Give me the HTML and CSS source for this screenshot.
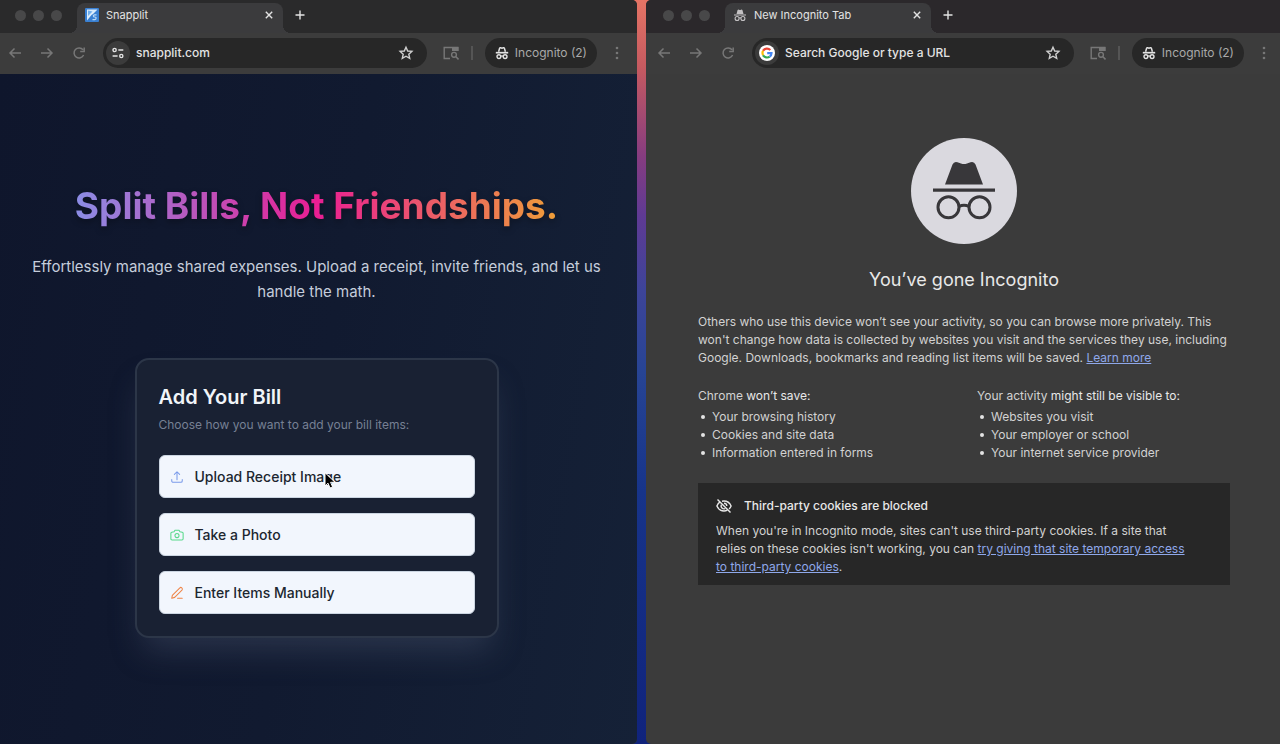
FILE: index.html
```
<!DOCTYPE html>
<html lang="en">
<head>
    <meta charset="UTF-8">
    <meta name="viewport" content="width=device-width, initial-scale=1.0">
    <title>Snapplit</title>
    <link rel="stylesheet" href="styles.css">
</head>
<body>
    <!-- Shared icons -->
    <svg class="icon-defs" aria-hidden="true">
        <symbol id="icon-back" viewBox="0 0 16 16">
            <path d="M14 8H3.500M7.500 3.500L3 8l4.500 4.500" fill="none" stroke="currentColor" stroke-width="1.5"/>
        </symbol>
        <symbol id="icon-forward" viewBox="0 0 16 16">
            <path d="M2 8h10.500M8.500 3.500L13 8l-4.500 4.500" fill="none" stroke="currentColor" stroke-width="1.5"/>
        </symbol>
        <symbol id="icon-reload" viewBox="0 0 16 16">
            <path d="M12.600 10A5 5 0 1 1 12 4.800M13.200 2.500v4H9.200" fill="none" stroke="currentColor" stroke-width="1.5"/>
        </symbol>
        <symbol id="icon-close" viewBox="0 0 10 10">
            <path d="M1.800 1.800l6.400 6.400M8.200 1.800L1.800 8.200" fill="none" stroke="currentColor" stroke-width="1.4"/>
        </symbol>
        <symbol id="icon-plus" viewBox="0 0 10 10">
            <path d="M5 .5v9M.5 5h9" fill="none" stroke="currentColor" stroke-width="1.4"/>
        </symbol>
        <symbol id="icon-star" viewBox="0 0 16 16">
            <path d="M8 2.200l1.700 3.800 4.200.4-3.100 2.800.9 4.100L8 11.200l-3.700 2.100.9-4.100-3.100-2.800L6.300 6z" fill="none" stroke="currentColor" stroke-width="1.4"/>
        </symbol>
        <symbol id="icon-panel" viewBox="0 0 16 14">
            <path d="M7 12.500H1.200v-11H14.800V5" fill="none" stroke="currentColor" stroke-width="1.4"/>
            <path d="M9 1h6.500v4H9z" fill="currentColor"/>
            <circle cx="11" cy="8.800" r="2.400" fill="none" stroke="currentColor" stroke-width="1.4"/>
            <path d="M12.700 10.500l2.800 2.900" stroke="currentColor" stroke-width="1.5"/>
        </symbol>
        <symbol id="icon-dots" viewBox="0 0 16 16">
            <circle cx="8" cy="3" r="1.300" fill="currentColor"/>
            <circle cx="8" cy="8" r="1.300" fill="currentColor"/>
            <circle cx="8" cy="13" r="1.300" fill="currentColor"/>
        </symbol>
        <symbol id="icon-agent" viewBox="0 0 14 14">
            <path d="M3.600 5.700L4.600 2.200Q4.900 1.500 5.600 1.700L7 2.100l1.400-.4q.7-.2 1 .5l1 3.500" fill="none" stroke="currentColor" stroke-width="1.5"/>
            <path d="M.8 6.700h12.400" stroke="currentColor" stroke-width="1.7"/>
            <circle cx="3.900" cy="10.600" r="1.900" fill="none" stroke="currentColor" stroke-width="1.4"/>
            <circle cx="10.100" cy="10.600" r="1.900" fill="none" stroke="currentColor" stroke-width="1.4"/>
            <path d="M5.700 10.200q1.300-.7 2.600 0" fill="none" stroke="currentColor" stroke-width="1.3"/>
        </symbol>
    </svg>

    <main class="desktop">
        <section class="window window-left" aria-label="Snapplit">
            <div class="tab-strip">
                <div class="lights"><span></span><span></span><span></span></div>
                <div class="tab">
                    <svg class="tab-icon" viewBox="0 0 14 14" aria-hidden="true">
                        <rect width="14" height="14" rx="1" fill="#3a80d2"/>
                        <path d="M2 1.500h10.500L8 6l-1.500 1L2 12.500z" fill="#dcecfb"/>
                        <path d="M3 2.500l4.500 1L3 8z" fill="#72b0ee"/>
                        <path d="M11.500 6.800H9.600q-1.200 0-1.200 1.100T9.800 9t1.300 1.300T9.700 11.600H7.500" fill="none" stroke="#b9d9f8" stroke-width="1.2"/>
                    </svg>
                    <span class="tab-title">Snapplit</span>
                    <button class="tab-close" aria-label="Close tab"><svg><use href="#icon-close"/></svg></button>
                </div>
                <button class="new-tab" aria-label="New tab"><svg><use href="#icon-plus"/></svg></button>
            </div>

            <div class="toolbar">
                <nav class="nav">
                    <button aria-label="Back"><svg><use href="#icon-back"/></svg></button>
                    <button aria-label="Forward"><svg><use href="#icon-forward"/></svg></button>
                    <button aria-label="Reload"><svg><use href="#icon-reload"/></svg></button>
                </nav>
                <div class="omnibox">
                    <button class="site-info" aria-label="Site information">
                        <svg viewBox="0 0 12 12">
                            <g fill="none" stroke="currentColor" stroke-width="1.4">
                                <circle cx="2.600" cy="3" r="1.600"/>
                                <path d="M6.300 3h5M.6 9h5"/>
                                <circle cx="9.300" cy="9" r="1.600"/>
                            </g>
                        </svg>
                    </button>
                    <input type="text" value="snapplit.com" aria-label="Address bar">
                    <button class="bookmark" aria-label="Bookmark this page"><svg><use href="#icon-star"/></svg></button>
                </div>
                <div class="actions">
                    <button aria-label="Side panel"><svg><use href="#icon-panel"/></svg></button>
                    <span class="separator"></span>
                    <button class="profile"><svg><use href="#icon-agent"/></svg>Incognito (2)</button>
                    <button aria-label="Menu"><svg><use href="#icon-dots"/></svg></button>
                </div>
            </div>

            <div class="page snapplit">
                <h1>Split Bills, Not Friendships.</h1>
                <p class="tagline">Effortlessly manage shared expenses. Upload a receipt, invite friends, and let us handle the math.</p>

                <div class="card">
                    <h2>Add Your Bill</h2>
                    <p>Choose how you want to add your bill items:</p>
                    <div class="options">
                        <button class="option">
                            <svg class="blue" viewBox="0 0 24 24">
                                <path d="M3 16.500v2.250A2.250 2.250 0 005.250 21h13.500A2.250 2.250 0 0021 18.750V16.500M16.500 7.500L12 3m0 0L7.500 7.500M12 3v13.500"/>
                            </svg>
                            Upload Receipt Image
                            <svg class="pointer" viewBox="0 0 12 18" aria-hidden="true">
                                <path d="M1 1v13l3-2.800 2 4.800 2.600-1.100-2-4.600h4.100z"/>
                            </svg>
                        </button>
                        <button class="option">
                            <svg class="green" viewBox="0 0 24 24">
                                <path d="M7 6.500L8.500 4h7L17 6.500l4 .7q1.500.3 1.500 1.800v9.500q0 2-2 2h-17q-2 0-2-2V9q0-1.500 1.500-1.800z"/>
                                <circle cx="12" cy="13" r="3.500"/>
                            </svg>
                            Take a Photo
                        </button>
                        <button class="option">
                            <svg class="orange" viewBox="0 0 24 24">
                                <path d="M16.500 3.500a2.500 2.500 0 0 1 4 3.500L8 19.500 3 21l1-5z"/>
                                <path d="M13 21h8"/>
                            </svg>
                            Enter Items Manually
                        </button>
                    </div>
                </div>
            </div>
        </section>

        <section class="window window-right" aria-label="New Incognito Tab">
            <div class="tab-strip">
                <div class="lights"><span></span><span></span><span></span></div>
                <div class="tab">
                    <svg class="tab-icon agent" viewBox="0 0 14 14" aria-hidden="true">
                        <path d="M3.500 6l1-3.700Q5 1.200 6 1.700q1 .4 2 0 1-.5 1.500.6l1 3.700z" fill="currentColor"/>
                        <path d="M1 7h12" stroke="currentColor" stroke-width="1.2"/>
                        <g fill="none" stroke="currentColor" stroke-width="1.1">
                            <circle cx="4.100" cy="10.500" r="2"/>
                            <circle cx="9.900" cy="10.500" r="2"/>
                            <path d="M6 10q1-.5 2 0"/>
                        </g>
                    </svg>
                    <span class="tab-title">New Incognito Tab</span>
                    <button class="tab-close" aria-label="Close tab"><svg><use href="#icon-close"/></svg></button>
                </div>
                <button class="new-tab" aria-label="New tab"><svg><use href="#icon-plus"/></svg></button>
            </div>

            <div class="toolbar">
                <nav class="nav">
                    <button aria-label="Back"><svg><use href="#icon-back"/></svg></button>
                    <button aria-label="Forward"><svg><use href="#icon-forward"/></svg></button>
                    <button aria-label="Reload"><svg><use href="#icon-reload"/></svg></button>
                </nav>
                <div class="omnibox">
                    <span class="site-info">
                        <svg class="google" viewBox="0 0 16 16" aria-hidden="true">
                            <circle cx="8" cy="8" r="8" fill="#fff"/>
                            <g fill="none" stroke-width="2.2">
                                <path d="M4.100 5.800A4.500 4.500 0 0 1 11.300 5" stroke="#ea4335"/>
                                <path d="M4.100 5.800a4.500 4.500 0 0 0 0 4.400" stroke="#fbbc05"/>
                                <path d="M4.100 10.200a4.500 4.500 0 0 0 6.600 1.400" stroke="#34a853"/>
                                <path d="M10.700 11.600A4.500 4.500 0 0 0 12.500 8.200H8.200" stroke="#4285f4"/>
                            </g>
                        </svg>
                    </span>
                    <input type="text" placeholder="Search Google or type a URL" aria-label="Address bar">
                    <button class="bookmark" aria-label="Bookmark this page"><svg><use href="#icon-star"/></svg></button>
                </div>
                <div class="actions">
                    <button aria-label="Side panel"><svg><use href="#icon-panel"/></svg></button>
                    <span class="separator"></span>
                    <button class="profile"><svg><use href="#icon-agent"/></svg>Incognito (2)</button>
                    <button aria-label="Menu"><svg><use href="#icon-dots"/></svg></button>
                </div>
            </div>

            <div class="page incognito">
                <svg class="badge" viewBox="0 0 106 106" aria-hidden="true">
                    <circle cx="53" cy="53" r="53" fill="#dad9df"/>
                    <g fill="#38373a">
                        <path d="M34 46.500L41.500 26.500Q43 23 46.500 24.200L50 25.600Q53 26.600 56 25.600L59.500 24.200Q63 23 64.500 26.500L72 46.500z"/>
                        <path d="M22 50.500h62v3.200H22z"/>
                    </g>
                    <g fill="none" stroke="#38373a" stroke-width="3">
                        <circle cx="37.500" cy="69.300" r="10.500"/>
                        <circle cx="68.500" cy="69.300" r="10.500"/>
                        <path d="M48 68.500q5-2.500 10 0"/>
                    </g>
                </svg>
                <h1>You’ve gone Incognito</h1>
                <div class="details">
                    <p>Others who use this device won’t see your activity, so you can browse more privately. This won't change how data is collected by websites you visit and the services they use, including Google. Downloads, bookmarks and reading list items will be saved. <a href="#">Learn more</a></p>
                    <div class="columns">
                        <div>
                            <p>Chrome <em>won’t save:</em></p>
                            <ul>
                                <li>Your browsing history</li>
                                <li>Cookies and site data</li>
                                <li>Information entered in forms</li>
                            </ul>
                        </div>
                        <div>
                            <p>Your activity <em>might still be visible to:</em></p>
                            <ul>
                                <li>Websites you visit</li>
                                <li>Your employer or school</li>
                                <li>Your internet service provider</li>
                            </ul>
                        </div>
                    </div>
                    <div class="cookies">
                        <h2>
                            <svg viewBox="0 0 16 16" aria-hidden="true">
                                <g fill="none" stroke="currentColor" stroke-width="1.4">
                                    <path d="M4.200 3.900Q2 5.300.9 8q2.200 5 7.100 5 1.800 0 3.400-.8M6 3.200Q7 3 8 3q4.900 0 7.100 5-.7 1.600-2 2.900"/>
                                    <path d="M5.500 6.700a2.800 2.800 0 0 0 3.800 3.800M8 5.200A2.800 2.800 0 0 1 10.800 8"/>
                                    <path d="M1.500 1.500l13 13"/>
                                </g>
                            </svg>
                            Third-party cookies are blocked
                        </h2>
                        <p>When you're in Incognito mode, sites can't use third-party cookies. If a site that relies on these cookies isn't working, you can <a href="#">try giving that site temporary access to third-party cookies</a>.</p>
                    </div>
                </div>
            </div>
        </section>
    </main>
</body>
</html>
```
FILE: styles.css
```
* {
    box-sizing: border-box;
}
body {
    margin: 0;
    font-family: Inter, "Liberation Sans", sans-serif;
    color: #e3e3e3;
}
h1, h2, p, ul {
    margin: 0;
    padding: 0;
}
button {
    display: flex;
    align-items: center;
    padding: 0;
    border: 0;
    background: none;
    color: inherit;
    font-family: inherit;
}
.icon-defs {
    display: none;
}

/* Desktop wallpaper shows between the two windows */
.desktop {
    display: grid;
    grid-template-columns: 637fr 634fr;
    gap: 9px;
    min-height: 100vh;
    background: linear-gradient(#e57465 0%, #c65a60 9%, #863c80 21%, #5f3a94 29%, #3d4499 39%, #274494 50%, #17348a 66%, #10237c 100%);
}
.window {
    display: flex;
    flex-direction: column;
    min-width: 0;
    overflow: hidden;
    background-color: #3b3b3b;
}
.window-left {
    border-radius: 0 5px 5px 0;
}
.window-right {
    border-radius: 5px 0 0 5px;
}

/* Tab strip */
.tab-strip {
    display: flex;
    height: 33px;
    padding-left: 15px;
    background-color: #2a2a2b;
}
.window-right .tab-strip {
    padding-left: 17px;
    background-color: #2b282b;
}
.lights {
    display: flex;
    align-items: center;
    gap: 7px;
    margin-right: 15px;
    padding-bottom: 3px;
}
.lights span {
    width: 11px;
    height: 11px;
    border-radius: 50%;
    background-color: #484849;
}
.tab {
    position: relative;
    display: flex;
    align-items: center;
    width: 206px;
    margin-top: 3px;
    padding: 0 9px 6px 8px;
    border-radius: 8px 8px 0 0;
    background-color: #3b3b3d;
}
/* Flared feet of the active tab */
.tab::before,
.tab::after {
    content: "";
    position: absolute;
    bottom: 0;
    width: 8px;
    height: 8px;
}
.tab::before {
    right: 100%;
    background: radial-gradient(circle at 0 0, transparent 8px, #3b3b3d 8px);
}
.tab::after {
    left: 100%;
    background: radial-gradient(circle at 100% 0, transparent 8px, #3b3b3d 8px);
}
.tab-icon {
    width: 14px;
    height: 14px;
    margin-right: 7px;
}
.tab-icon.agent {
    color: #c3c1c3;
}
.tab-title {
    flex: 1;
    font-size: 11px;
    line-height: 16px;
}
.tab-close svg,
.new-tab svg {
    width: 10px;
    height: 10px;
}
.new-tab {
    margin-left: 12px;
    padding-bottom: 3px;
}

/* Toolbar */
.toolbar {
    display: flex;
    align-items: center;
    gap: 16px;
    height: 41px;
    padding: 0 12px 2px 7px;
    background-color: #3c3c3c;
}
.window-right .toolbar {
    padding: 0 8px 2px 10px;
}
.toolbar svg {
    width: 16px;
    height: 16px;
}
.nav {
    display: flex;
    gap: 16px;
    color: #777;
}
.omnibox {
    display: flex;
    flex: 1;
    align-items: center;
    min-width: 0;
    height: 30px;
    padding: 0 13px 0 3px;
    border-radius: 15px;
    background-color: #272727;
}
.site-info {
    display: flex;
    flex: none;
    align-items: center;
    justify-content: center;
    width: 24px;
    height: 24px;
    border-radius: 50%;
    background-color: #3b3b3b;
}
.toolbar .site-info svg {
    width: 12px;
    height: 12px;
}
.toolbar .site-info .google {
    width: 16px;
    height: 16px;
}
.omnibox input {
    flex: 1;
    min-width: 0;
    padding: 0 6px;
    border: 0;
    outline: 0;
    background: none;
    color: #e3e3e3;
    font-family: inherit;
    font-size: 12px;
    font-weight: 500;
}
.omnibox input::placeholder {
    color: #e3e3e3;
}
.bookmark {
    color: #d0d0d0;
}
.actions {
    display: flex;
    align-items: center;
    gap: 12px;
    color: #777;
}
.separator {
    width: 2px;
    height: 14px;
    background-color: #555;
}
.profile {
    gap: 6px;
    height: 30px;
    padding: 0 10px;
    border-radius: 15px;
    background-color: #272727;
    color: #a9a9a9;
    font-size: 12px;
    white-space: nowrap;
}
.toolbar .profile svg {
    width: 14px;
    height: 14px;
    color: #e3e3e3;
}

/* Snapplit landing page */
.page {
    display: flex;
    flex: 1;
    flex-direction: column;
    align-items: center;
}
.snapplit {
    padding: 104px 20px 40px 16px;
    background: linear-gradient(100deg, #0f162c, #111a30 50%, #152137);
}
.snapplit h1 {
    background: linear-gradient(90deg, #8b8de6, #e91e93 50%, #ef9f38);
    background-clip: text;
    -webkit-background-clip: text;
    color: transparent;
    filter: drop-shadow(0 3px 3px rgba(0, 0, 0, 0.3));
    font-size: 37px;
    font-weight: 700;
    line-height: 56px;
    white-space: nowrap;
}
.tagline {
    max-width: 584px;
    margin-top: 20px;
    color: #c5cddb;
    font-size: 15px;
    line-height: 25px;
    text-align: center;
}
.card {
    width: 364px;
    margin-top: 54px;
    padding: 21px 22px 22px;
    border: 2px solid #2c3648;
    border-radius: 14px;
    background-color: #192133;
    box-shadow: 0 20px 32px -8px rgba(90, 100, 125, 0.35);
}
.card h2 {
    color: #f1f5f9;
    font-size: 20px;
    font-weight: 600;
    line-height: 32px;
}
.card p {
    margin-top: 2px;
    color: #768093;
    font-size: 12px;
    line-height: 20px;
}
.options {
    display: grid;
    gap: 15px;
    margin-top: 20px;
}
.option {
    position: relative;
    gap: 11px;
    height: 43px;
    padding: 0 10px;
    border: 1px solid #cbd5e1;
    border-radius: 6px;
    background-color: #f2f6fd;
    color: #20262f;
    font-size: 14px;
    font-weight: 500;
}
.option svg {
    width: 14px;
    height: 14px;
    fill: none;
    stroke: currentColor;
    stroke-width: 1.8;
    stroke-linecap: round;
    stroke-linejoin: round;
}
.blue {
    color: #7b9bea;
}
.green {
    color: #58d98b;
}
.orange {
    color: #ef8548;
}
.option .pointer {
    position: absolute;
    top: 16px;
    left: 164px;
    width: 12px;
    height: 18px;
    fill: #000;
    stroke: #fff;
    stroke-width: 1;
}

/* Incognito start page */
.incognito {
    padding: 64px 48px 40px 50px;
    color: #d2d2d2;
}
.badge {
    width: 106px;
    height: 106px;
}
.incognito h1 {
    margin-top: 20px;
    color: #e8e8e8;
    font-size: 18px;
    font-weight: 400;
    line-height: 32px;
}
.details {
    max-width: 532px;
    margin-top: 17px;
    font-size: 12px;
    line-height: 18px;
}
.details a {
    color: #8fa8ea;
}
.columns {
    display: grid;
    grid-template-columns: 1fr 1fr;
    gap: 26px;
    margin-top: 20px;
}
.columns em {
    color: #e8e8e8;
    font-style: normal;
}
.columns ul {
    margin-top: 3px;
    padding-left: 3px;
    list-style: none;
}
.columns li {
    display: flex;
    align-items: center;
    gap: 7px;
}
.columns li::before {
    content: "";
    width: 4px;
    height: 4px;
    border-radius: 50%;
    background-color: #e3e3e3;
}
.cookies {
    margin-top: 21px;
    padding: 14px 36px 9px 18px;
    background-color: #272727;
}
.cookies h2 {
    display: flex;
    align-items: center;
    gap: 12px;
    color: #e8e8e8;
    font-size: 12px;
    font-weight: 500;
    line-height: 18px;
}
.cookies h2 svg {
    width: 16px;
    height: 16px;
}
.cookies p {
    margin-top: 7px;
}
```
